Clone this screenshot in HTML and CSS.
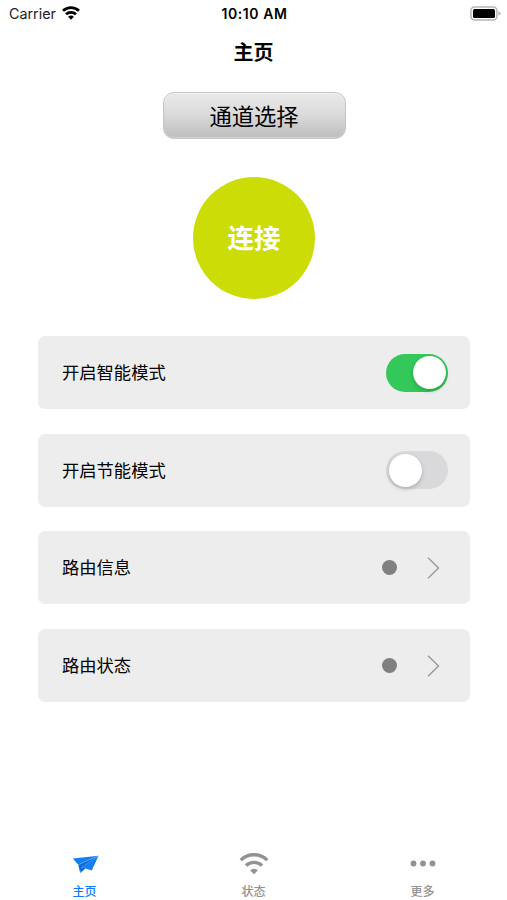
FILE: index.html
```html
<!DOCTYPE html>
<html lang="zh-CN">
<head>
    <meta charset="UTF-8">
    <meta name="viewport" content="width=device-width, initial-scale=1.0">
    <title>主页</title>
    <link rel="stylesheet" href="styles.css">
</head>
<body>
    <div class="status-bar">
        <div class="carrier">
            <span>Carrier</span>
            <svg width="18" height="14" viewBox="0 0 18 14" fill="none" stroke="#000" stroke-width="2.7">
                <path d="M1 4.8a11.5 11.5 0 0 1 16 0"/>
                <path d="M4 8.3a7.2 7.2 0 0 1 10 0"/>
                <path d="M9 13.7L6.1 10.8a4.2 4.2 0 0 1 5.8 0z" fill="#000" stroke="none"/>
            </svg>
        </div>
        <div class="time">10:10 AM</div>
        <div class="battery">
            <svg width="31" height="15" viewBox="0 0 31 15">
                <rect x="0.9" y="0.9" width="26" height="13" rx="3.6" fill="#fff" stroke="#b5b5b5" stroke-width="1.5"/>
                <rect x="3" y="2.9" width="22" height="9" rx="1.5" fill="#000"/>
                <path d="M28.4 5.2q2.2 .8 2.2 2.2t-2.2 2.2z" fill="#b5b5b5"/>
            </svg>
        </div>
    </div>

    <h1>主页</h1>

    <main>
        <button class="channel">通道选择</button>
        <button class="connect">连接</button>

        <div class="list">
            <div class="card">
                <span>开启智能模式</span>
                <span class="switch on"></span>
            </div>
            <div class="card">
                <span>开启节能模式</span>
                <span class="switch"></span>
            </div>
            <div class="card">
                <span>路由信息</span>
                <span class="more">
                    <i class="dot"></i>
                    <svg width="13" height="22" viewBox="0 0 13 22"><path d="M1 .7L11.5 11 1 21.3"/></svg>
                </span>
            </div>
            <div class="card">
                <span>路由状态</span>
                <span class="more">
                    <i class="dot"></i>
                    <svg width="13" height="22" viewBox="0 0 13 22"><path d="M1 .7L11.5 11 1 21.3"/></svg>
                </span>
            </div>
        </div>
    </main>

    <nav class="tabs">
        <a class="active">
            <svg width="30" height="24" viewBox="0 0 30 24">
                <path d="M2.8 6.6L28.5 3.8 8.2 12.8z" fill="#1480f0"/>
                <path d="M8.2 12.8L28.5 3.8 11.4 15.4 10.2 21z" fill="#0c6ddb"/>
                <path d="M11.4 15.2L28.5 3.8 21.8 18.6z" fill="#1480f0"/>
                <path d="M10.2 21l1.2-5.8 4 1.4z" fill="#0864ca"/>
                <path d="M8.2 12.8L28.5 3.8" fill="none" stroke="#7fb9fa" stroke-width=".4"/>
            </svg>
            <span>主页</span>
        </a>
        <a>
            <svg width="30" height="24" viewBox="0 0 30 24" fill="none" stroke="#929292" stroke-width="3.4">
                <path d="M1.7 8.1a19.1 19.1 0 0 1 26.6 0"/>
                <path d="M7 13.6a11.5 11.5 0 0 1 16 0"/>
                <path d="M15 22.2l-3.8-3.8a5.4 5.4 0 0 1 7.6 0z" fill="#929292" stroke="none"/>
            </svg>
            <span>状态</span>
        </a>
        <a>
            <svg width="30" height="24" viewBox="0 0 30 24" fill="#929292">
                <circle cx="5.5" cy="11.5" r="2.9"/>
                <circle cx="15" cy="11.5" r="2.9"/>
                <circle cx="24.5" cy="11.5" r="2.9"/>
            </svg>
            <span>更多</span>
        </a>
    </nav>
</body>
</html>
```

FILE: styles.css
```css
* { box-sizing: border-box; }
body {
    margin: 0;
    height: 900px;
    display: flex;
    flex-direction: column;
    background: #fff;
    color: #000;
    font-family: Inter, "Noto Sans CJK SC", sans-serif;
}
svg { display: block; }

/* 状态栏 */
.status-bar {
    display: grid;
    grid-template-columns: 1fr auto 1fr;
    align-items: center;
    height: 27px;
    padding: 0 6px 0 9px;
    font-size: 14.3px;
}
.carrier { display: flex; align-items: center; gap: 6px; color: #222; }
.carrier svg { margin-top: -1px; }
.time { font-weight: 600; font-size: 14px; letter-spacing: 0.55px; margin-left: -1px; }
.battery { justify-self: end; margin-top: -1px; }

h1 {
    margin: 0;
    height: 51px;
    line-height: 53px;
    text-align: center;
    font-size: 20px;
    font-weight: 700;
}

main { display: flex; flex-direction: column; align-items: center; padding: 14px 37px 0 38px; }
button { padding: 0; font-family: inherit; cursor: pointer; }
.channel {
    width: 183px;
    height: 47px;
    padding-bottom: 2px;
    border: 1px solid #c6c6c6;
    border-radius: 11px;
    background: linear-gradient(#e9e9e9, #dcdcdc 45%, #bdbdbd);
    box-shadow: inset 0 1px 0 #f3f3f3, inset 0 -2px 1px -1px #d6d6d6;
    font-size: 22.3px;
    color: #000;
}
.connect {
    width: 122px;
    height: 122px;
    margin-top: 38px;
    padding-bottom: 3px;
    border: none;
    border-radius: 50%;
    background: #cbdc06;
    color: #fff;
    font-size: 26.5px;
    font-weight: 700;
}

/* 设置列表 */
.list { width: 100%; margin-top: 37px; display: grid; gap: 24.7px; }
.card {
    display: flex;
    justify-content: space-between;
    align-items: center;
    height: 73px;
    padding: 0 22px 0 24px;
    border-radius: 7px;
    background: #ededed;
    font-size: 17.3px;
}
.card > span:first-child { padding-bottom: 2px; }
.switch { width: 62px; height: 38px; padding: 2.5px; border-radius: 19px; background: #d9d9db; }
.switch::before {
    content: "";
    display: block;
    width: 33px;
    height: 33px;
    border-radius: 50%;
    background: #fff;
    box-shadow: 0 2px 4px rgba(0,0,0,0.2);
}
.switch.on { background: #34c759; }
.switch.on::before { margin-left: auto; }
.more { display: flex; align-items: center; gap: 30px; margin-right: 8px; }
.more path { fill: none; stroke: #999; stroke-width: 1.4; }
.dot { width: 15px; height: 15px; border-radius: 50%; background: #808080; }

/* 底部导航 */
.tabs { display: grid; grid-template-columns: repeat(3, 1fr); height: 50px; margin-top: auto; }
.tabs a { display: flex; flex-direction: column; align-items: center; gap: 8px; padding-top: 2px; color: #929292; }
.tabs span { font-size: 12px; line-height: 16px; font-weight: 500; }
.tabs .active { color: #0a7aff; }
```
